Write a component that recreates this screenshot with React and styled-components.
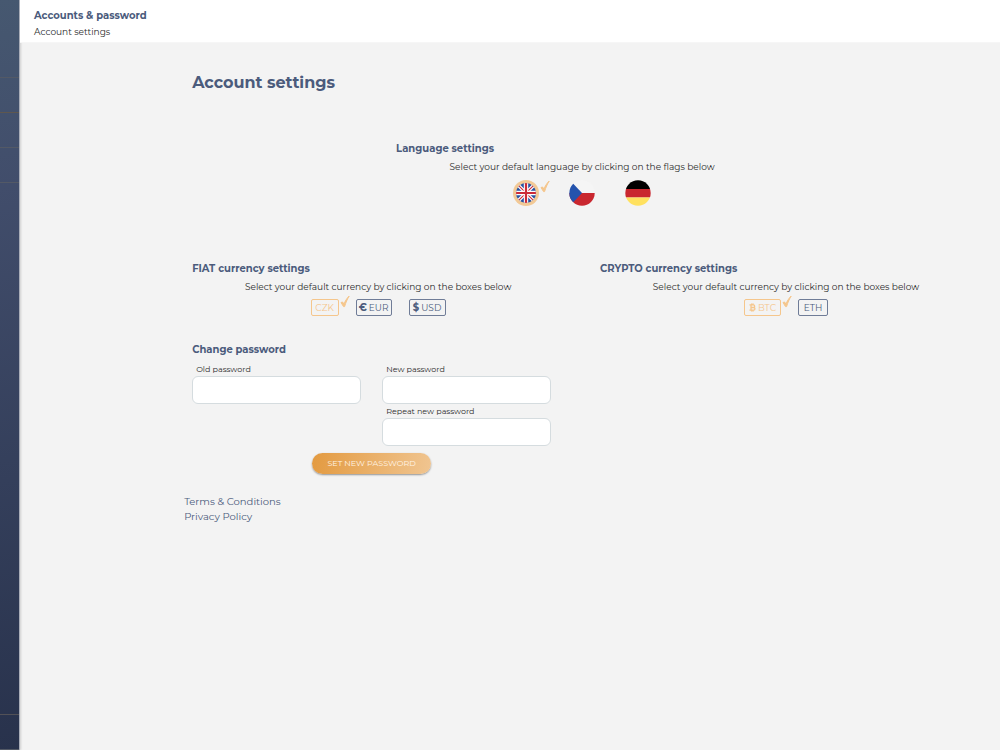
import React, { useState } from "react";
import styled, { createGlobalStyle } from "styled-components";

const navy = "#4b5b7c";
const orange = "#f5c68c";

const GlobalStyle = createGlobalStyle`
  *, *::before, *::after { box-sizing: border-box; }
  body {
    margin: 0;
    background: #f3f3f3;
    color: #2c2c2c;
    font-family: Montserrat, Inter, "Open Sans", sans-serif;
    font-size: 9px;
    line-height: 16px;
  }
  button, input { font: inherit; }
  h1, h2, p { margin: 0; }
`;

const Page = styled.div`
  display: flex;
  min-height: 100vh;
`;

const Sidebar = styled.nav`
  display: flex;
  flex-direction: column;
  flex: 0 0 20px;
  border-right: 1px solid #a9adb8;
  box-shadow: 1px 0 2px rgba(0, 0, 0, 0.15);
  background: linear-gradient(170deg, #465870 0%, #414d6b 25%, #28324c 100%);
`;

const SidebarItem = styled.div`
  height: ${(p) => (p.$logo ? 78 : p.$last ? 36 : 35)}px;
  margin-top: ${(p) => (p.$last ? "auto" : 0)};
  border-top: ${(p) => (p.$last ? "1px solid #525157" : "none")};
  border-bottom: 1px solid ${(p) => (p.$active ? "#5e574f" : "#535966")};
`;

const Main = styled.main`
  flex: 1;
  min-width: 0;
`;

const Header = styled.header`
  height: 43px;
  padding: 8px 14px 0;
  background: #fff;
  border-bottom: 1px solid #f6f6f6;
`;

const Heading = styled.h2`
  color: ${navy};
  font-size: 10px;
  line-height: 16px;
  font-weight: 700;
`;

const Content = styled.div`
  margin-left: 16.75%;
  padding-top: 28px;
`;

const Title = styled.h1`
  padding-left: 8px;
  color: ${navy};
  font-size: 16px;
  line-height: 24px;
  font-weight: 700;
`;

const Columns = styled.div`
  display: grid;
  grid-template-columns: 1fr 1fr;
  margin-top: ${(p) => p.$top}px;
`;

const Setting = styled.section`
  width: ${(p) => (p.$centered ? "50%" : "auto")};
  margin: ${(p) => (p.$centered ? "46px auto 0" : "0")};
  padding: 0 28px 0 8px;
`;

const Hint = styled.p`
  margin-top: 2px;
  text-align: center;
  white-space: nowrap;
`;

const Choices = styled.div`
  display: flex;
  justify-content: center;
  margin-top: ${(p) => p.$top}px;
  gap: ${(p) => p.$gap}px;
`;

const Choice = styled.div`
  position: relative;
  display: flex;
`;

const Check = styled.svg`
  position: absolute;
  left: 100%;
  top: ${(p) => p.$top}px;
  width: 10px;
  height: 13px;
  margin-left: 1px;
`;

const FlagButton = styled.button`
  width: 26px;
  height: 26px;
  padding: 0;
  border: 0;
  border-radius: 50%;
  background: none;
  cursor: pointer;
  svg { display: block; }
`;

const CurrencyButton = styled.button`
  display: flex;
  align-items: center;
  justify-content: center;
  gap: 2px;
  width: ${(p) => p.$width}px;
  height: 17px;
  padding: 0;
  border: 1px solid ${(p) => (p.$selected ? orange : "#6f7c97")};
  border-radius: 2px;
  background: transparent;
  color: ${(p) => (p.$selected ? orange : navy)};
  line-height: 15px;
  cursor: pointer;
  b { font-size: 10px; }
`;

const PasswordSection = styled.section`
  max-width: 376px;
  margin-top: 26px;
  padding: 0 9px 0 8px;
`;

const PasswordForm = styled.form`
  display: grid;
  grid-template-columns: 1fr 1fr;
  column-gap: 21px;
  margin-top: 4px;
`;

const Field = styled.div`
  grid-column: ${(p) => p.$column};
`;

const Label = styled.label`
  display: block;
  padding-left: 4px;
  font-size: 8px;
  line-height: 14px;
`;

const Input = styled.input`
  display: block;
  width: 100%;
  height: 28px;
  padding: 0 8px;
  border: 1px solid #d5dcdf;
  border-radius: 6px;
  background: #fff;
`;

const Submit = styled.button`
  grid-column: 1 / -1;
  justify-self: center;
  width: 119px;
  height: 21px;
  margin-top: 7px;
  padding: 0;
  border: 0;
  border-radius: 11px;
  background: linear-gradient(100deg, #e39a40, #f0c591);
  box-shadow: 0 1px 2px rgba(0, 0, 0, 0.4);
  color: #fff4e6;
  font-size: 8px;
  line-height: 21px;
  cursor: pointer;
`;

const Links = styled.div`
  display: flex;
  flex-direction: column;
  align-items: flex-start;
  margin-top: 20px;
`;

const TextLink = styled.a`
  color: ${navy};
  font-size: 10px;
  line-height: 15px;
  text-decoration: none;
`;

const CheckMark = ({ top }) => (
  <Check $top={top} viewBox="0 0 10 13" aria-hidden="true">
    <path d="M1 7.5 2.6 7 4 9.2C5.2 5.8 6.8 3.4 9.2 1 7.3 4.2 5.8 7.4 4.6 11.600H3.5Z" fill={orange} stroke={orange} strokeWidth="1" />
  </Check>
);

const Bitcoin = () => (
  <svg width="7" height="9" viewBox="0 0 8 10" fill="none" stroke="currentColor" aria-hidden="true">
    <path d="M.5 2h4.500a1.400 1.400 0 0 1 0 3H2.200M2.200 5H5.300a1.500 1.500 0 0 1 0 3H.5M2.300 2v6M3 .5V2M4.700.5V2M3 8v1.500M4.700 8v1.500" strokeWidth="1.5" />
  </svg>
);

const flags = {
  English: (
    <>
      <circle cx="13" cy="13" r="13" fill="#f2c996" />
      <clipPath id="uk"><circle cx="13" cy="13" r="10" /></clipPath>
      <g clipPath="url(#uk)">
        <path d="M0 0h26v26H0z" fill="#2753a4" />
        <path d="M3 3 23 23M23 3 3 23" stroke="#fff" strokeWidth="3.4" />
        <path d="M3 3 23 23M23 3 3 23" stroke="#cc2b38" strokeWidth="1.1" />
        <path d="M13 2v22M2 13h22" stroke="#fff" strokeWidth="4.4" />
        <path d="M13 2v22M2 13h22" stroke="#cc2b38" strokeWidth="2.2" />
      </g>
    </>
  ),
  Czech: (
    <>
      <clipPath id="cz"><circle cx="13" cy="13" r="12.7" /></clipPath>
      <g clipPath="url(#cz)">
        <path d="M0 0h26v13H0z" fill="#f5f5f5" />
        <path d="M0 13h26v13H0z" fill="#c9272f" />
        <path d="M0 0 4 3.5 13 13 4 22.5 0 26Z" fill="#2453ad" />
      </g>
    </>
  ),
  German: (
    <>
      <clipPath id="de"><circle cx="13" cy="13" r="12.7" /></clipPath>
      <g clipPath="url(#de)">
        <path d="M0 0h26v9H0z" fill="#000" />
        <path d="M0 9h26v8.5H0z" fill="#c9272f" />
        <path d="M0 17.5h26V26H0z" fill="#ffe15f" />
      </g>
    </>
  ),
};

const fiat = [
  { code: "CZK", width: 28 },
  { code: "EUR", symbol: <b>€</b>, width: 36 },
  { code: "USD", symbol: <b>$</b>, width: 37 },
];

const crypto = [
  { code: "BTC", symbol: <Bitcoin />, width: 37 },
  { code: "ETH", width: 30 },
];

const CurrencySetting = ({ title, options }) => {
  const [selected, setSelected] = useState(options[0].code);
  return (
    <Setting>
      <Heading>{title}</Heading>
      <Hint>Select your default currency by clicking on the boxes below</Hint>
      <Choices $top={4} $gap={17}>
        {options.map(({ code, symbol, width }) => (
          <Choice key={code}>
            <CurrencyButton
              type="button"
              $width={width}
              $selected={selected === code}
              aria-pressed={selected === code}
              onClick={() => setSelected(code)}
            >
              {symbol}
              <span>{code}</span>
            </CurrencyButton>
            {selected === code && <CheckMark top={-4} />}
          </Choice>
        ))}
      </Choices>
    </Setting>
  );
};

export default function App() {
  const [language, setLanguage] = useState("English");
  return (
    <Page>
      <GlobalStyle />
      <Sidebar>
        <SidebarItem $logo />
        <SidebarItem $active />
        <SidebarItem />
        <SidebarItem />
        <SidebarItem $last />
      </Sidebar>
      <Main>
        <Header>
          <Heading>Accounts &amp; password</Heading>
          <p>Account settings</p>
        </Header>
        <Content>
          <Title>Account settings</Title>
          <Setting $centered>
            <Heading>Language settings</Heading>
            <Hint>Select your default language by clicking on the flags below</Hint>
            <Choices $top={5} $gap={30}>
              {Object.entries(flags).map(([name, art]) => (
                <Choice key={name}>
                  <FlagButton type="button" aria-label={name} aria-pressed={language === name} onClick={() => setLanguage(name)}>
                    <svg width="26" height="26" viewBox="0 0 26 26" aria-hidden="true">{art}</svg>
                  </FlagButton>
                  {language === name && <CheckMark top={0} />}
                </Choice>
              ))}
            </Choices>
          </Setting>
          <Columns $top={55}>
            <CurrencySetting title="FIAT currency settings" options={fiat} />
            <CurrencySetting title="CRYPTO currency settings" options={crypto} />
          </Columns>
          <PasswordSection>
            <Heading>Change password</Heading>
            <PasswordForm onSubmit={(e) => e.preventDefault()}>
              <Field $column={1}>
                <Label htmlFor="old-password">Old password</Label>
                <Input id="old-password" type="password" />
              </Field>
              <Field $column={2}>
                <Label htmlFor="new-password">New password</Label>
                <Input id="new-password" type="password" />
              </Field>
              <Field $column={2}>
                <Label htmlFor="repeat-password">Repeat new password</Label>
                <Input id="repeat-password" type="password" />
              </Field>
              <Submit type="submit">SET NEW PASSWORD</Submit>
            </PasswordForm>
          </PasswordSection>
          <Links>
            <TextLink href="#terms">Terms &amp; Conditions</TextLink>
            <TextLink href="#privacy">Privacy Policy</TextLink>
          </Links>
        </Content>
      </Main>
    </Page>
  );
}
